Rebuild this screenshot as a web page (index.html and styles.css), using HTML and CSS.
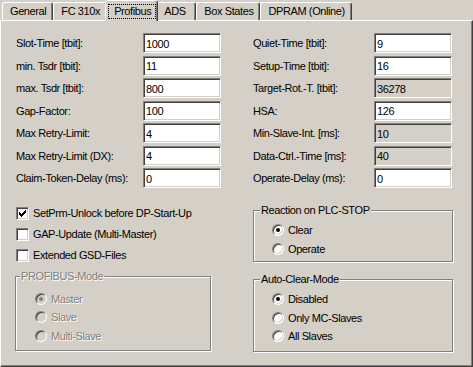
FILE: index.html
```html
<!DOCTYPE html>
<html lang="en">
<head>
    <meta charset="UTF-8">
    <title>Profibus</title>
    <link rel="stylesheet" href="styles.css">
</head>
<body>
    <div class="tabs">
        <div class="tab">General</div>
        <div class="tab">FC 310x</div>
        <div class="tab active"><span class="focus">Profibus</span></div>
        <div class="tab">ADS</div>
        <div class="tab">Box States</div>
        <div class="tab">DPRAM (Online)</div>
    </div>

    <div class="panel">
        <div class="col">
            <div class="fields">
                <div class="field"><label>Slot-Time [tbit]:</label><input type="text" value="1000"></div>
                <div class="field"><label>min. Tsdr [tbit]:</label><input type="text" value="11"></div>
                <div class="field"><label>max. Tsdr [tbit]:</label><input type="text" value="800"></div>
                <div class="field"><label>Gap-Factor:</label><input type="text" value="100"></div>
                <div class="field"><label>Max Retry-Limit:</label><input type="text" value="4"></div>
                <div class="field"><label>Max Retry-Limit (DX):</label><input type="text" value="4"></div>
                <div class="field"><label>Claim-Token-Delay (ms):</label><input type="text" value="0"></div>
            </div>

            <div class="checks">
                <label class="check">
                    <span class="box">
                        <svg width="7" height="7" viewBox="0 0 7 7" shape-rendering="crispEdges"><path d="M6 0h1v1h-1z M5 1h2v1h-2z M0 2h1v1h-1z M4 2h3v1h-3z M0 3h2v1h-2z M3 3h3v1h-3z M0 4h5v1h-5z M1 5h3v1h-3z M2 6h1v1h-1z" fill="#000"/></svg>
                    </span>
                    SetPrm-Unlock before DP-Start-Up
                </label>
                <label class="check"><span class="box"></span>GAP-Update (Multi-Master)</label>
                <label class="check"><span class="box"></span>Extended GSD-Files</label>
            </div>

            <fieldset class="group mode disabled">
                <legend>PROFIBUS-Mode</legend>
                <label class="radio"><span class="dot on"></span>Master</label>
                <label class="radio"><span class="dot"></span>Slave</label>
                <label class="radio"><span class="dot"></span>Multi-Slave</label>
            </fieldset>
        </div>

        <div class="col right">
            <div class="fields">
                <div class="field"><label>Quiet-Time [tbit]:</label><input type="text" value="9"></div>
                <div class="field"><label>Setup-Time [tbit]:</label><input type="text" value="16"></div>
                <div class="field"><label>Target-Rot.-T. [tbit]:</label><input type="text" value="36278" class="ro" readonly></div>
                <div class="field"><label>HSA:</label><input type="text" value="126"></div>
                <div class="field"><label>Min-Slave-Int. [ms]:</label><input type="text" value="10" class="ro" readonly></div>
                <div class="field"><label>Data-Ctrl.-Time [ms]:</label><input type="text" value="40" class="ro" readonly></div>
                <div class="field"><label>Operate-Delay (ms):</label><input type="text" value="0"></div>
            </div>

            <fieldset class="group reaction">
                <legend>Reaction on PLC-STOP</legend>
                <label class="radio"><span class="dot on"></span>Clear</label>
                <label class="radio"><span class="dot"></span>Operate</label>
            </fieldset>

            <fieldset class="group autoclear">
                <legend>Auto-Clear-Mode</legend>
                <label class="radio"><span class="dot on"></span>Disabled</label>
                <label class="radio"><span class="dot"></span>Only MC-Slaves</label>
                <label class="radio"><span class="dot"></span>All Slaves</label>
            </fieldset>
        </div>
    </div>
</body>
</html>
```

FILE: styles.css
```css
body {
    margin: 0;
    background: #d4d0c8;
    font-family: "Liberation Sans", Arial, sans-serif;
    font-size: 11px;
    letter-spacing: -0.4px;
    color: #000;
}

/* tab strip */
.tabs {
    display: flex;
    height: 20px;
    padding-left: 2px;
}
.tab {
    box-sizing: border-box;
    height: 18px;
    margin-top: 2px;
    min-width: 40px;
    padding: 0 6px 1px 7px;
    display: flex;
    align-items: center;
    border: 1px solid;
    border-color: #fff #404040 transparent #fff;
    border-bottom: none;
    border-radius: 3px 3px 0 0;
    box-shadow: inset -1px 0 0 #808080;
}
.tab.active {
    position: relative;
    z-index: 1;
    height: 21px;
    margin: 0 -2px;
    padding: 3px 1px 1px 2px;
    align-items: flex-start;
    background: #d4d0c8;
}
.focus {
    display: flex;
    align-items: center;
    height: 15px;
    box-sizing: border-box;
    padding: 0 4px 1px 5px;
    border: 1px dotted #000;
}

/* page body */
.panel {
    box-sizing: border-box;
    height: 347px;
    padding: 12px 17px 0 15px;
    display: grid;
    grid-template-columns: 205px 200px;
    column-gap: 32px;
    align-items: start;
    border: 1px solid;
    border-color: #fff #404040 #404040 #fff;
    box-shadow: inset -1px -1px 0 #808080;
}
.col {
    display: flex;
    flex-direction: column;
}

.fields {
    display: flex;
    flex-direction: column;
    gap: 2.5px;
}
.right .fields {
    padding-right: 1px;
}
.field {
    height: 20px;
    display: flex;
    align-items: center;
    justify-content: space-between;
}
.field input {
    box-sizing: border-box;
    width: 78px;
    height: 20px;
    margin: 0;
    padding: 1px 2px 0;
    font: inherit;
    letter-spacing: inherit;
    color: #000;
    background: #fff;
    border: 1px solid;
    border-color: #808080 #fff #fff #808080;
    box-shadow: inset 1px 1px 0 #404040, inset -1px -1px 0 #d4d0c8;
    outline: none;
}
.field input.ro {
    background: #d4d0c8;
}

/* checkboxes */
.checks {
    margin-top: 14.5px;
    display: flex;
    flex-direction: column;
}
.check {
    height: 21px;
    display: flex;
    align-items: center;
    gap: 4px;
}
.box {
    box-sizing: border-box;
    width: 13px;
    height: 13px;
    display: flex;
    align-items: center;
    justify-content: center;
    background: #fff;
    border: 1px solid;
    border-color: #808080 #fff #fff #808080;
    box-shadow: inset 1px 1px 0 #404040, inset -1px -1px 0 #d4d0c8;
}

/* group boxes */
.group {
    margin: 0;
    min-width: 0;
    border: 1px solid #808080;
    box-shadow: inset 1px 1px 0 #fff, 1px 1px 0 #fff;
}
.group legend {
    line-height: 13px;
    padding: 0 1px;
    background: #d4d0c8;
}
.mode {
    box-sizing: border-box;
    width: 196px;
    margin: 4px 0 0 -1px;
    padding: 7px 0 4.75px 19px;
}
.mode legend {
    margin-left: -15px;
}
.reaction {
    margin-top: 16px;
    padding: 4px 0 3px 18px;
}
.autoclear {
    margin-top: 10.5px;
    padding: 4.25px 0 5.75px 18px;
}
.reaction legend,
.autoclear legend {
    margin-left: -12px;
}

.radio {
    height: 18.5px;
    display: flex;
    align-items: center;
    gap: 4px;
}
.dot {
    box-sizing: border-box;
    width: 12px;
    height: 12px;
    display: flex;
    align-items: center;
    justify-content: center;
    border-radius: 50%;
    background: #fff;
    border: 1px solid;
    border-color: #808080 #fff #fff #808080;
    box-shadow: inset 1px 1px 0 #404040, inset -1px -1px 0 #d4d0c8;
}
.dot.on::after {
    content: "";
    width: 4px;
    height: 4px;
    border-radius: 50%;
    background: #000;
}

.disabled legend,
.disabled .radio {
    color: #808080;
    text-shadow: 1px 1px 0 #fff;
}
.disabled .dot {
    background: #d4d0c8;
}
.disabled .dot.on::after {
    background: #808080;
}
```
